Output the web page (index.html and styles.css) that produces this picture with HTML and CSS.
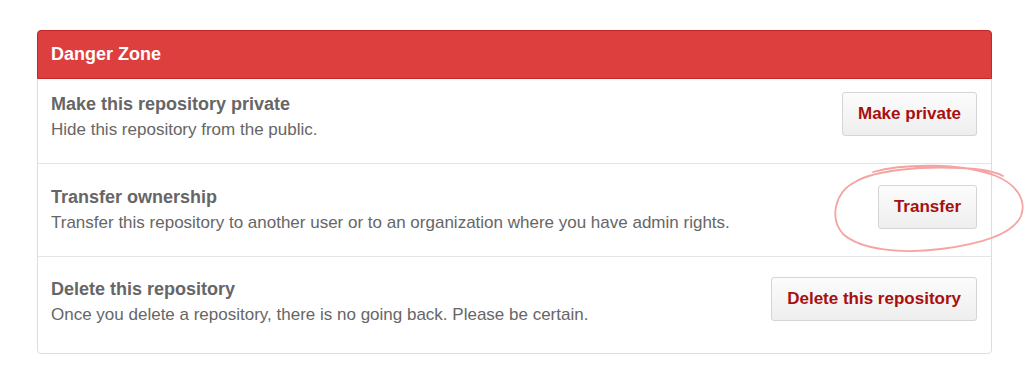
FILE: index.html
```html
<!DOCTYPE html>
<html>
<head>
<meta charset="utf-8">
<link rel="stylesheet" href="styles.css">
</head>
<body>
<div class="page">
  <section class="danger">
    <h3 class="danger-head">Danger Zone</h3>
    <div class="row row-first">
      <div class="info">
        <div class="title">Make this repository private</div>
        <div class="desc">Hide this repository from the public.</div>
      </div>
      <button class="btn">Make private</button>
    </div>
    <div class="row row-mid">
      <div class="info">
        <div class="title">Transfer ownership</div>
        <div class="desc">Transfer this repository to another user or to an organization where you have admin rights.</div>
      </div>
      <div class="btn-wrap">
        <button class="btn">Transfer</button>
        <svg class="scribble" width="196" height="94" viewBox="0 0 196 94">
          <path d="M42 10 C 70 2, 130 0, 165 14 C 185 22, 196 38, 190 54 C 182 72, 150 82, 110 87 C 70 92, 30 88, 12 72 C -2 56, 4 30, 24 20 C 44 8, 90 4, 130 6 C 150 7, 165 10, 172 14" fill="none" stroke="#f5a3a3" stroke-width="1.8" stroke-linecap="round" stroke-linejoin="round"/>
        </svg>
      </div>
    </div>
    <div class="row row-last">
      <div class="info">
        <div class="title">Delete this repository</div>
        <div class="desc">Once you delete a repository, there is no going back. Please be certain.</div>
      </div>
      <button class="btn">Delete this repository</button>
    </div>
  </section>
</div>
</body>
</html>
```
FILE: styles.css
```css
html, body {
  margin: 0;
  padding: 0;
  background: #fff;
}
.page {
  padding: 30px 32px 0 37px;
  font-family: "Liberation Sans", Arial, sans-serif;
}
.danger {
  width: 955px;
  border: 1px solid #ddd;
  border-radius: 4px;
  box-sizing: border-box;
}
.danger-head {
  margin: -1px -1px 0 -1px;
  height: 49px;
  box-sizing: border-box;
  padding: 0 13px;
  display: flex;
  align-items: center;
  background: #dd3f3f;
  border: 1px solid #c42727;
  border-radius: 4px 4px 0 0;
  color: #fff;
  font-size: 18px;
  font-weight: bold;
}
.row {
  display: flex;
  align-items: flex-start;
  justify-content: space-between;
  padding: 0 14px 0 13px;
  box-sizing: border-box;
}
.row-first {
  height: 84px;
  padding-top: 13px;
}
.row-mid {
  height: 93px;
  padding-top: 21px;
  border-top: 1px solid #e5e5e5;
}
.row-last {
  height: 97px;
  padding-top: 20px;
  border-top: 1px solid #e5e5e5;
}
.title {
  font-size: 18px;
  font-weight: bold;
  color: #666;
  line-height: 25px;
}
.desc {
  font-size: 17px;
  color: #666;
  line-height: 25px;
}
.btn-wrap {
  position: relative;
}
.btn {
  display: block;
  height: 44px;
  padding: 0 15px;
  font-family: "Liberation Sans", Arial, sans-serif;
  font-size: 17px;
  font-weight: bold;
  color: #a80f0f;
  background: linear-gradient(#fcfcfc, #eeeeee);
  border: 1px solid #d5d5d5;
  border-radius: 3px;
}
.scribble {
  position: absolute;
  left: -47px;
  top: -23px;
  pointer-events: none;
}
```
